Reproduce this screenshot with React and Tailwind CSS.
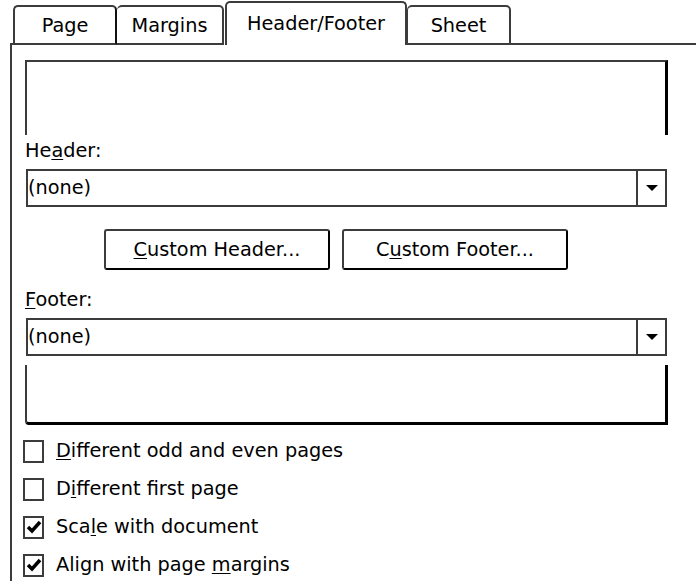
import React from 'react';

const line = 'border-[#3c3c3c]';

function Tab({ label, active, className }) {
  if (active) {
    return (
      <div className={`h-[44px] border-t-2 border-x-2 ${line} rounded-t-[5px] bg-white flex justify-center pt-[10px] ${className}`}>
        {label}
      </div>
    );
  }
  return (
    <div className={`h-[40px] border-2 ${line} rounded-t-[5px] flex justify-center pt-[8px] ${className}`}>
      {label}
    </div>
  );
}

function Combo() {
  return (
    <div className={`ml-[1px] w-[641px] h-[38px] border-2 ${line} flex bg-white`}>
      <div className="flex-1 flex items-center">(none)</div>
      <div className={`w-[29px] border-l-2 ${line} flex items-center justify-center`}>
        <svg width="12" height="6" viewBox="0 0 12 6">
          <polygon points="0,0 12,0 6,6" fill="#000" />
        </svg>
      </div>
    </div>
  );
}

function Check({ checked, children }) {
  return (
    <div className="h-[38px] flex items-center">
      <div className={`ml-[-2px] w-[21px] h-[23px] border-2 ${line} bg-white flex items-center justify-center`}>
        {checked && (
          <svg width="16" height="16" viewBox="0 0 16 16">
            <polyline points="2,8 6,12 14,3" fill="none" stroke="#000" strokeWidth="3.5" />
          </svg>
        )}
      </div>
      <div className="ml-[12px]">{children}</div>
    </div>
  );
}

export default function App() {
  return (
    <div className="w-[696px] h-[581px] overflow-hidden bg-white text-black text-[19.3px] leading-[22px] font-['DejaVu_Sans',sans-serif]">
      {/* tab strip */}
      <div className="flex items-end h-[45px]">
        <div className="w-[10px]" />
        <div className={`w-[3px] border-b-2 ${line}`} />
        <Tab label="Page" className="w-[104px] border-r-[#111]" />
        <Tab label="Margins" className="w-[107px] border-l-0" />
        <Tab label="Header/Footer" active className="w-[182px] ml-[1px]" />
        <Tab label="Sheet" className="w-[104px] border-l-[1px]" />
        <div className={`flex-1 border-b-2 ${line}`} />
      </div>

      {/* panel */}
      <div className={`ml-[10px] h-[536px] border-l-2 ${line} pl-[13px] pt-[15px]`}>
        <div className="w-[643px] flex flex-col">
          <div className={`h-[75px] border-t-2 border-l-2 ${line} border-r-[3px] border-r-black`} />

          <div className="mt-[5px]">
            He<span className="underline underline-offset-2">a</span>der:
          </div>
          <div className="mt-[7px]">
            <Combo />
          </div>

          <div className="mt-[22px] ml-[79px] flex gap-[12px]">
            <button className={`w-[226px] h-[41px] border-2 ${line} border-r-black border-b-black rounded-[3px] flex items-center justify-center`}>
              <span>
                <span className="underline underline-offset-2">C</span>ustom Header...
              </span>
            </button>
            <button className={`w-[226px] h-[41px] border-2 ${line} border-r-black border-b-black rounded-[3px] flex items-center justify-center`}>
              <span>
                C<span className="underline underline-offset-2">u</span>stom Footer...
              </span>
            </button>
          </div>

          <div className="mt-[19px]">
            <span className="underline underline-offset-2">F</span>ooter:
          </div>
          <div className="mt-[7px]">
            <Combo />
          </div>

          <div className={`mt-[9px] h-[60px] border-l-2 ${line} border-r-[3px] border-b-[3px] border-r-black border-b-black rounded-bl-[4px]`} />

          <div className="mt-[7px]">
            <Check>
              <span className="underline underline-offset-2">D</span>ifferent odd and even pages
            </Check>
            <Check>
              D<span className="underline underline-offset-2">i</span>fferent first page
            </Check>
            <Check checked>
              Sca<span className="underline underline-offset-2">l</span>e with document
            </Check>
            <Check checked>
              Align with page <span className="underline underline-offset-2">m</span>argins
            </Check>
          </div>
        </div>
      </div>
    </div>
  );
}
